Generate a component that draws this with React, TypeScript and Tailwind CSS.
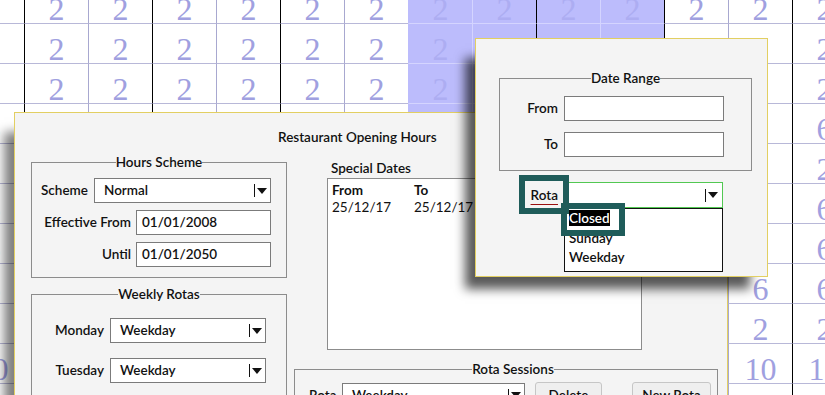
const values = [2, 2, 2, 6, 2, 6, 6, 6, 2, 10, 2];

function Grid() {
  return (
    <div className="-ml-[40px] -mt-[16px] grid w-[896px] grid-cols-[repeat(14,64px)]">
      {values.map((v, r) =>
        Array.from({ length: 14 }, (_, c) => {
          const blue = c >= 7 && c <= 10;
          let left = "border-l-[#a8a8d0]";
          if (c % 2 === 1) left = "border-l-black";
          if (blue && c % 2 === 0) left = "border-l-[#d4d4ff]";
          if (c === 7) left = "border-l-[#bcbcfc]";
          return (
            <div
              key={`${r}-${c}`}
              className={`h-[40px] border-b border-l pt-[9px] text-center font-['Liberation_Serif',serif] text-[32px] font-normal leading-[32px] ${left} ${
                blue
                  ? "border-b-[#d4d4ff] bg-[#bcbcfc] text-[#adadf2]"
                  : "border-b-[#b8b8d8] bg-white text-[#a0a0e0]"
              }`}
            >
              {v}
            </div>
          );
        })
      )}
    </div>
  );
}

function Arrow() {
  return (
    <>
      <span className="h-[13px] w-px bg-[#111]" />
      <svg width="10" height="6" viewBox="0 0 10 6" className="ml-[2px]">
        <path d="M0 0H10L5 6Z" fill="#111" />
      </svg>
    </>
  );
}

function Select({ value, className }: { value?: string; className: string }) {
  return (
    <div className={`flex h-[25px] items-center border bg-white pl-[9px] pr-[3px] ${className}`}>
      <span className="flex-1">{value}</span>
      <Arrow />
    </div>
  );
}

function Field({ value, className }: { value?: string; className: string }) {
  return (
    <div className={`flex h-[25px] items-center border border-[#7b7b7b] bg-white pl-[5px] ${className}`}>
      {value}
    </div>
  );
}

function Button({ label, className }: { label: string; className: string }) {
  return (
    <button className={`h-[26px] rounded-[3px] border border-[#c6c6c6] bg-[#efefef] text-center leading-[16px] ${className}`}>
      {label}
    </button>
  );
}

function MainDialog() {
  const days = ["Monday", "Tuesday", "Wednesday", "Thursday", "Friday"];
  return (
    <div className="absolute left-[14px] top-[112px] h-[320px] w-[714px] border border-[#e2cf62] bg-[#f4f4f4] shadow-[-14px_16px_10px_-4px_rgba(0,0,0,0.5)]">
      <div className="pl-[263px] pt-[16px] leading-[16px]">Restaurant Opening Hours</div>
      <div className="mt-[9px] flex items-start">
        <div className="ml-[16px] w-[256px]">
          <fieldset className="border border-[#8c8c8c] pb-[10px] pt-[8px]">
            <legend className="mx-auto leading-[16px]">Hours Scheme</legend>
            <div className="flex items-center">
              <span className="w-[62px] pl-[9px]">Scheme</span>
              <Select value="Normal" className="w-[177px] border-[#7b7b7b]" />
            </div>
            <div className="mt-[7px] flex items-center">
              <span className="w-[99px] text-right">Effective From</span>
              <Field value="01/01/2008" className="ml-[5px] w-[135px]" />
            </div>
            <div className="mt-[7px] flex items-center">
              <span className="w-[99px] text-right">Until</span>
              <Field value="01/01/2050" className="ml-[5px] w-[135px]" />
            </div>
          </fieldset>
          <fieldset className="mt-[8px] border border-[#8c8c8c] pb-[10px] pt-[16px]">
            <legend className="mx-auto leading-[16px]">Weekly Rotas</legend>
            {days.map((d, i) => (
              <div key={d} className={`flex items-center ${i > 0 ? "mt-[15px]" : ""}`}>
                <span className="w-[72px] text-right">{d}</span>
                <Select value="Weekday" className="ml-[6px] w-[156px] border-[#7b7b7b]" />
              </div>
            ))}
          </fieldset>
        </div>
        <div className="ml-[7px] w-[424px]">
          <div className="ml-[37px] mt-[6px] leading-[16px]">Special Dates</div>
          <div className="ml-[33px] mt-[2px] flex h-[172px] w-[315px] border border-[#8c8c8c] bg-white pl-[4px] pt-[3px] leading-[17px]">
            <div className="w-[82px]">
              <div className="font-bold">From</div>
              <div className="font-normal">25/12/17</div>
            </div>
            <div>
              <div className="font-bold">To</div>
              <div className="font-normal">25/12/17</div>
            </div>
          </div>
          <fieldset className="mt-[11px] border border-[#8c8c8c] pb-[10px] pl-[14px] pt-[5px]">
            <legend className="mx-auto leading-[16px]">Rota Sessions</legend>
            <div className="flex h-[26px] items-center">
              <span className="w-[33px]">Rota</span>
              <Select value="Weekday" className="w-[183px] border-[#7b7b7b]" />
              <Button label="Delete" className="ml-[10px] w-[67px]" />
              <Button label="New Rota" className="ml-[30px] w-[79px]" />
            </div>
          </fieldset>
        </div>
      </div>
    </div>
  );
}

function DateRangeDialog() {
  return (
    <div className="absolute left-[475px] top-[38px] h-[239px] w-[293px] border border-[#e2cf62] bg-[#f4f4f4] shadow-[-14px_16px_10px_-4px_rgba(0,0,0,0.65)]">
      <fieldset className="ml-[23px] mt-[31px] w-[253px] border border-[#8c8c8c] pb-[13px] pt-[10px]">
        <legend className="mx-auto leading-[16px]">Date Range</legend>
        <div className="flex items-center">
          <span className="w-[58px] text-right">From</span>
          <Field className="ml-[6px] w-[160px]" />
        </div>
        <div className="mt-[11px] flex items-center">
          <span className="w-[58px] text-right">To</span>
          <Field className="ml-[6px] w-[160px]" />
        </div>
      </fieldset>
      <div className="ml-[23px] mt-[11px] flex items-center">
        <span className="w-[59px] text-right">
          <span className="underline decoration-[#9a1010] underline-offset-[4px]">Rota</span>
        </span>
        <div className="relative ml-[6px] w-[159px]">
          <Select className="h-[26px] w-[159px] border-[#52c852] pr-[4px]" />
          <div className="absolute left-0 top-[26px] h-[64px] w-[159px] border border-[#111] bg-white pl-[4px] leading-[19.5px]">
            <div>
              <span className="bg-black text-white">Closed</span>
            </div>
            <div>Sunday</div>
            <div>Weekday</div>
          </div>
        </div>
      </div>
      <div className="absolute left-[43px] top-[136px] h-[39px] w-[50px] border-[6px] border-[#1f5c5a]" />
      <div className="absolute left-[85px] top-[164px] h-[33px] w-[64px] border-[6px] border-[#1f5c5a]" />
    </div>
  );
}

export default function App() {
  return (
    <div className="relative h-[395px] w-[825px] overflow-hidden bg-white font-['Lato',sans-serif] text-[13.5px] font-semibold text-[#111]">
      <Grid />
      <MainDialog />
      <DateRangeDialog />
    </div>
  );
}
